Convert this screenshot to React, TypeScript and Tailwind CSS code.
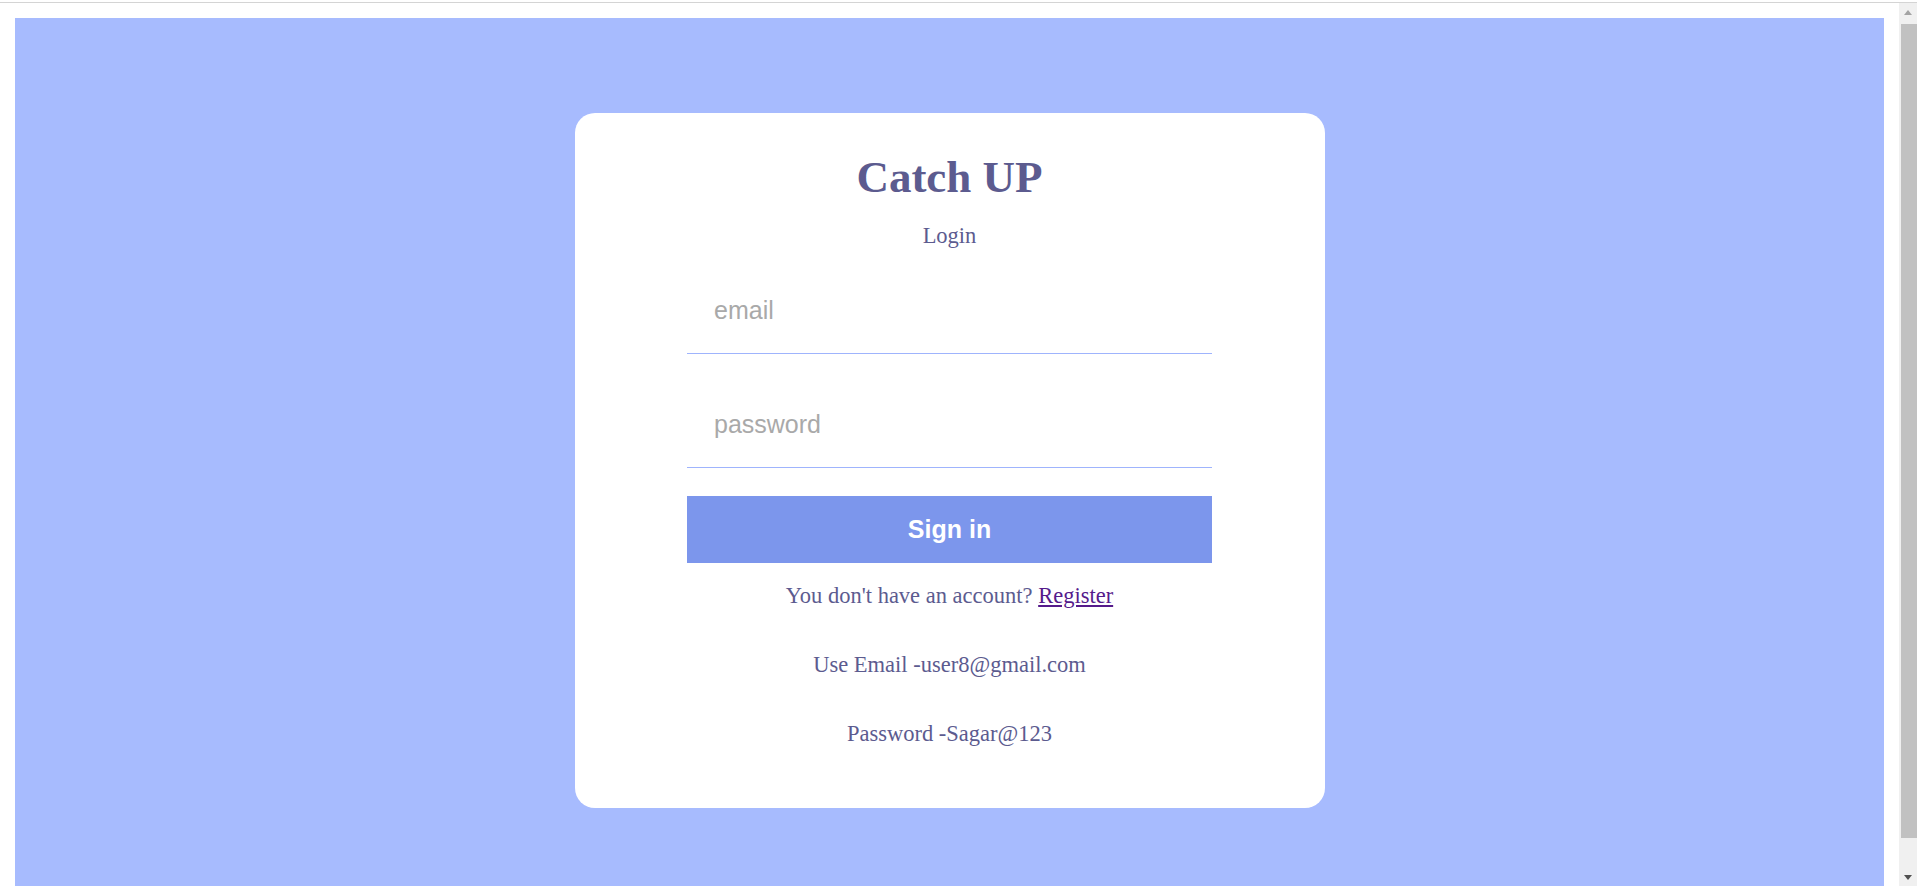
import React from "react";

const serif = "font-['Liberation_Serif','Times_New_Roman',serif]";
const sans = "font-['Liberation_Sans',Arial,sans-serif]";

const Scrollbar = () => (
  <div className="flex w-[18px] flex-col bg-[#f0f0f0]">
    <div className="flex h-[18px] items-center justify-center">
      <svg width="8" height="5" viewBox="0 0 8 5">
        <polygon points="0,5 8,5 4,0" fill="#a3a3a3" />
      </svg>
    </div>
    <div className="h-[3px]"></div>
    <div className="ml-[2px] flex-1 bg-[#c1c1c1]"></div>
    <div className="h-[30px]"></div>
    <div className="flex h-[18px] items-center justify-center">
      <svg width="8" height="5" viewBox="0 0 8 5">
        <polygon points="0,0 8,0 4,5" fill="#505050" />
      </svg>
    </div>
  </div>
);

const LoginCard = () => {
  return (
    <div
      className={`mt-[95px] flex h-[695px] w-[750px] flex-col items-center rounded-[20px] bg-white pt-[38px] text-[#5c5b8f] ${serif}`}
    >
      <h1 className="text-[45px] font-bold leading-[52px]">Catch UP</h1>
      <p className="mt-[20px] text-[22.5px] leading-[26px]">Login</p>

      <form
        className="mt-[19px] flex w-[525px] flex-col"
        onSubmit={(e) => e.preventDefault()}
      >
        <input
          type="email"
          placeholder="email"
          className={`h-[86px] w-full border-0 border-b border-[#9fb4fd] bg-transparent pl-[27px] text-[25px] text-[#333] outline-none placeholder:text-[#a9a9a9] ${sans}`}
        />
        <input
          type="password"
          placeholder="password"
          className={`mt-[28px] h-[86px] w-full border-0 border-b border-[#9fb4fd] bg-transparent pl-[27px] text-[25px] text-[#333] outline-none placeholder:text-[#a9a9a9] ${sans}`}
        />
        <button
          type="submit"
          className={`mt-[28px] h-[67px] w-full bg-[#7c96ec] text-[25px] font-bold text-white ${sans}`}
        >
          Sign in
        </button>
      </form>

      <p className="mt-[20px] text-[22.5px] leading-[26px]">
        You don&apos;t have an account?{" "}
        <a href="#" className="text-[#551a8b] underline">
          Register
        </a>
      </p>
      <p className="mt-[43px] text-[22.5px] leading-[26px]">
        Use Email -user8@gmail.com
      </p>
      <p className="mt-[43px] text-[22.5px] leading-[26px]">
        Password -Sagar@123
      </p>
    </div>
  );
};

const App = () => {
  return (
    <div className="flex h-[886px] flex-col overflow-hidden bg-white">
      <div className="h-[2px]"></div>
      <div className="h-px bg-[#d4d4d4]"></div>
      <div className="flex flex-1">
        <div className="flex-1 px-[15px] pt-[15px]">
          <div className="flex h-full justify-center bg-[#a7bbfe]">
            <LoginCard />
          </div>
        </div>
        <Scrollbar />
      </div>
    </div>
  );
};

export default App;
